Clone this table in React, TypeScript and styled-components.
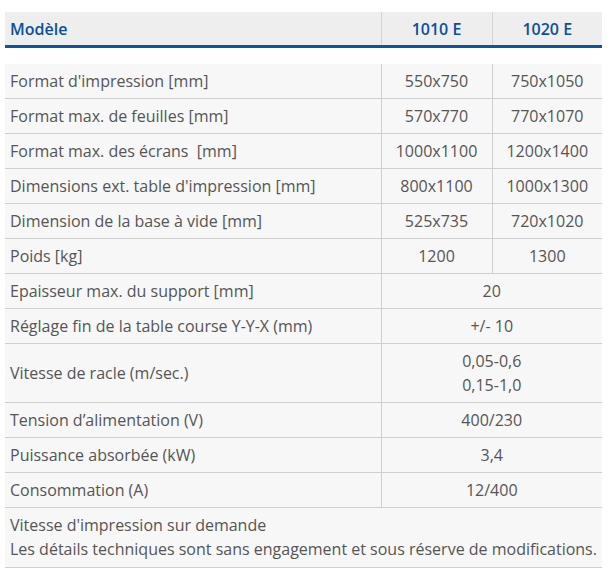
import * as React from 'react'
import styled, { createGlobalStyle } from 'styled-components'

const GlobalStyle = createGlobalStyle`
  body {
    margin: 0;
    background: #ffffff;
    font-family: "Open Sans", "Liberation Sans", sans-serif;
  }
`

const Page = styled.div`
  padding: 12px 9px 0 5px;
`

const Table = styled.table`
  width: 597px;
  border-collapse: collapse;
  table-layout: fixed;
  font-size: 16px;
  line-height: 24px;
  color: #555555;
`

const HeadTable = styled(Table)`
  margin-bottom: 16px;
`

const HeadCell = styled.th<{ $align?: 'left' | 'center' }>`
  background: #eeeeee;
  color: #0b4f9a;
  font-weight: 600;
  font-size: 16px;
  text-align: ${(p) => p.$align || 'center'};
  padding: 5px 5px 4px;
  height: 24px;
  border-bottom: 3px solid #0a54a0;
  border-left: 1px solid #d4d4d4;
  &:first-child {
    border-left: none;
  }
`

const Row = styled.tr`
  background: #f7f7f7;
  border-bottom: 1px solid #cfcfcf;
`

const Cell = styled.td<{ $align?: 'left' | 'center' }>`
  text-align: ${(p) => p.$align || 'center'};
  padding: 5px 5px;
  border-left: 1px solid #cfcfcf;
  font-weight: 400;
  &:first-child {
    border-left: none;
  }
`

const Note = styled.td`
  padding: 5px 5px 6px;
  text-align: left;
`

type Spec = { label: string; values: string[] }

const specs: Spec[] = [
  { label: "Format d'impression [mm]", values: ['550x750', '750x1050'] },
  { label: 'Format max. de feuilles [mm]', values: ['570x770', '770x1070'] },
  { label: 'Format max. des écrans\u00a0 [mm]', values: ['1000x1100', '1200x1400'] },
  { label: "Dimensions ext. table d'impression [mm]", values: ['800x1100', '1000x1300'] },
  { label: 'Dimension de la base à vide [mm]', values: ['525x735', '720x1020'] },
  { label: 'Poids [kg]', values: ['1200', '1300'] },
  { label: 'Epaisseur max. du support [mm]', values: ['20'] },
  { label: 'Réglage fin de la table course Y-Y-X (mm)', values: ['+/- 10'] },
  { label: 'Vitesse de racle (m/sec.)', values: ['0,05-0,6\n0,15-1,0'] },
  { label: 'Tension d’alimentation (V)', values: ['400/230'] },
  { label: 'Puissance absorbée (kW)', values: ['3,4'] },
  { label: 'Consommation (A)', values: ['12/400'] },
]

const Multi = styled.span`
  white-space: pre-line;
`

export default function App() {
  return (
    <Page>
      <GlobalStyle />
      <HeadTable>
        <colgroup>
          <col style={{ width: 376 }} />
          <col style={{ width: 111 }} />
          <col style={{ width: 110 }} />
        </colgroup>
        <thead>
          <tr>
            <HeadCell $align="left">Modèle</HeadCell>
            <HeadCell>1010 E</HeadCell>
            <HeadCell>1020 E</HeadCell>
          </tr>
        </thead>
      </HeadTable>
      <Table>
        <colgroup>
          <col style={{ width: 376 }} />
          <col style={{ width: 111 }} />
          <col style={{ width: 110 }} />
        </colgroup>
        <tbody>
          {specs.map((s) => (
            <Row key={s.label}>
              <Cell $align="left">{s.label}</Cell>
              {s.values.map((v, i) => (
                <Cell key={i} colSpan={s.values.length === 1 ? 2 : 1}>
                  <Multi>{v}</Multi>
                </Cell>
              ))}
            </Row>
          ))}
          <Row>
            <Note colSpan={3}>
              Vitesse d'impression sur demande
              <br />
              Les détails techniques sont sans engagement et sous réserve de modifications.
            </Note>
          </Row>
        </tbody>
      </Table>
    </Page>
  )
}
